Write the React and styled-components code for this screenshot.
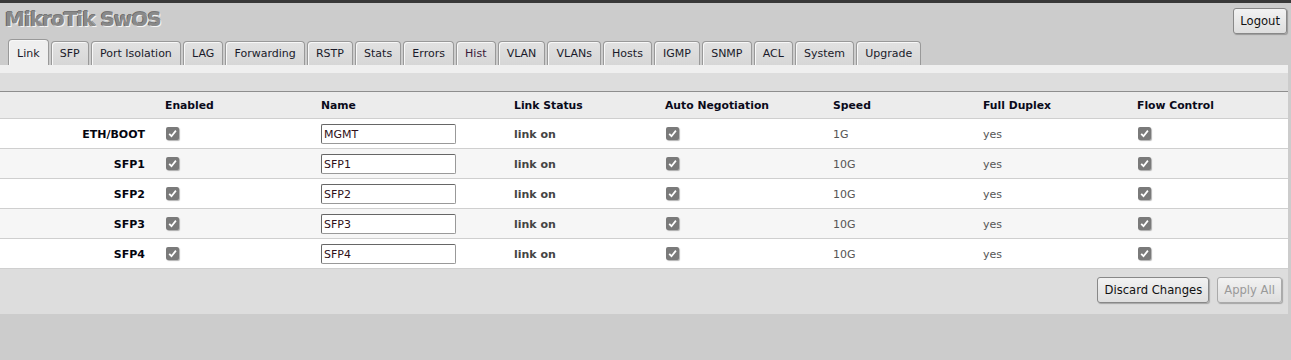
import React, { useState } from 'react';
import styled, { createGlobalStyle } from 'styled-components';

const GlobalStyle = createGlobalStyle`
  body {
    margin: 0;
    background: #cccccc;
    font-family: "DejaVu Sans", Verdana, sans-serif;
    font-size: 11px;
    color: #222;
  }
`;

const Page = styled.div`
  border-top: 3px solid #383838;
  min-height: 357px;
`;

const Header = styled.div`
  display: flex;
  justify-content: space-between;
  align-items: flex-start;
  height: 36px;
`;

const Logo = styled.div`
  font-weight: bold;
  font-size: 20px;
  letter-spacing: -1px;
  color: #8a8a8a;
  padding: 4px 0 0 5px;
  text-shadow: 1px 1px 0 #f4f4f4, -1px 0 0 #666, 0 -1px 0 #777;
`;

const Button = styled.button`
  font-family: "DejaVu Sans", Verdana, sans-serif;
  font-size: 11.6px;
  height: 26px;
  padding: 0 6px;
  color: ${p => (p.disabled ? '#999' : '#111')};
  background: linear-gradient(#f2f2f2, #dedede);
  border: 1px solid ${p => (p.disabled ? '#aaa' : '#888')};
  border-radius: 3px;
  box-shadow: 1px 1px 1px rgba(0, 0, 0, 0.25);
`;

const LogoutButton = styled(Button)`
  margin: 5px 4px 0 0;
`;

const TabBar = styled.div`
  display: flex;
  align-items: flex-end;
  gap: 2px;
  padding-left: 8px;
  height: 26px;
`;

const Tab = styled.div`
  height: ${p => (p.active ? '26px' : '24px')};
  box-sizing: border-box;
  padding: 0 8.1px;
  display: flex;
  align-items: center;
  padding-top: ${p => (p.active ? '1px' : '0')};
  font-size: 11px;
  color: ${p => p.tone || '#1a1a2a'};
  background: ${p => (p.active ? '#efefef' : 'linear-gradient(#e2e2e2, #d6d6d6)')};
  border: 1px solid #999;
  border-bottom: none;
  border-radius: 4px 4px 0 0;
  box-shadow: inset 1px 1px 0 #f8f8f8;
  cursor: pointer;
`;

const Panel = styled.div`
  margin-right: 3px;
  background: #dddddd;
`;

const Strip = styled.div`
  height: 8px;
  background: #efefef;
`;

const Spacer = styled.div`
  height: 18px;
`;

const Table = styled.div`
  border-top: 1px solid #8e8e8e;
`;

const Row = styled.div`
  display: grid;
  grid-template-columns: 165px 156px 193px 151px 168px 150px 154px 1fr;
  align-items: center;
  height: ${p => (p.head ? '25px' : '28px')};
  padding-top: 1px;
  background: ${p => p.bg};
  border-bottom: 1px solid #cfcfcf;
`;

const HeadCell = styled.div`
  font-weight: bold;
  font-size: 10.8px;
  color: #0a0a1a;
`;

const PortName = styled.div`
  font-weight: bold;
  color: #050510;
  text-align: right;
  padding-right: 20px;
`;

const Status = styled.div`
  font-weight: bold;
  color: #444;
`;

const Value = styled.div`
  color: #555;
`;

const Box = styled.span`
  display: inline-flex;
  align-items: center;
  justify-content: center;
  width: 13px;
  height: 13px;
  margin-left: 1px;
  border-radius: 2px;
  background: #7a7a7a;
  box-shadow: 1px 1px 1px rgba(0, 0, 0, 0.3);
`;

const NameInput = styled.input`
  width: 135px;
  height: 20px;
  box-sizing: border-box;
  padding: 0 2px;
  font-family: "DejaVu Sans", Verdana, sans-serif;
  font-size: 11px;
  color: #301018;
  background: #fff;
  border: 1px solid #999;
  border-top-color: #666;
  border-left-color: #666;
  border-radius: 2px;
  outline: none;
`;

const Footer = styled.div`
  display: flex;
  justify-content: flex-end;
  gap: 8px;
  padding: 8px 6px 0 0;
  height: 37px;
`;

const Check = () => (
  <Box>
    <svg width="9" height="9" viewBox="0 0 9 9">
      <path d="M1.2 4.8 L3.5 7.2 L7.9 1.6" fill="none" stroke="#fff" strokeWidth="1.8" />
    </svg>
  </Box>
);

const tabs = ['Link', 'SFP', 'Port Isolation', 'LAG', 'Forwarding', 'RSTP', 'Stats', 'Errors', 'Hist',
  'VLAN', 'VLANs', 'Hosts', 'IGMP', 'SNMP', 'ACL', 'System', 'Upgrade'];

const ports = [
  { port: 'ETH/BOOT', name: 'MGMT', speed: '1G' },
  { port: 'SFP1', name: 'SFP1', speed: '10G' },
  { port: 'SFP2', name: 'SFP2', speed: '10G' },
  { port: 'SFP3', name: 'SFP3', speed: '10G' },
  { port: 'SFP4', name: 'SFP4', speed: '10G' },
];

const columns = ['', 'Enabled', 'Name', 'Link Status', 'Auto Negotiation', 'Speed', 'Full Duplex', 'Flow Control'];

export default function App() {
  const [active, setActive] = useState('Link');
  return (
    <Page>
      <GlobalStyle />
      <Header>
        <Logo>MikroTik SwOS</Logo>
        <LogoutButton>Logout</LogoutButton>
      </Header>
      <TabBar>
        {tabs.map(t => (
          <Tab key={t} active={t === active} tone={t === 'Hist' ? '#3a1a3a' : undefined} onClick={() => setActive(t)}>
            {t}
          </Tab>
        ))}
      </TabBar>
      <Panel>
        <Strip />
        <Spacer />
        <Table>
          <Row head bg="#ececec">
            {columns.map((c, i) => <HeadCell key={i}>{c}</HeadCell>)}
          </Row>
          {ports.map((p, i) => (
            <Row key={p.port} bg={i % 2 ? '#f6f6f6' : '#ffffff'}>
              <PortName>{p.port}</PortName>
              <div><Check /></div>
              <div><NameInput defaultValue={p.name} /></div>
              <Status>link on</Status>
              <div><Check /></div>
              <Value>{p.speed}</Value>
              <Value>yes</Value>
              <div><Check /></div>
            </Row>
          ))}
        </Table>
        <Footer>
          <Button>Discard Changes</Button>
          <Button disabled>Apply All</Button>
        </Footer>
      </Panel>
    </Page>
  );
}
